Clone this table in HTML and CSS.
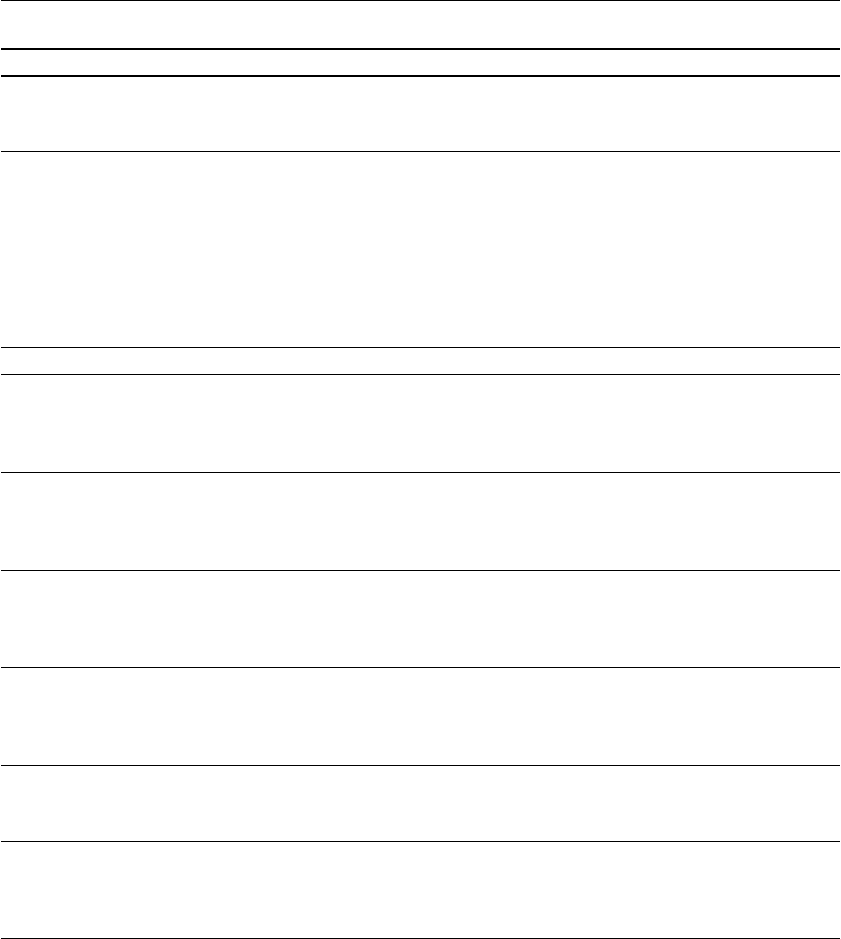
FILE: index.html
```html
<!DOCTYPE html>
<html lang="en">
<head>
<meta charset="utf-8">
<title>Table</title>
<link rel="stylesheet" href="styles.css">
</head>
<body>
<div class="sheet">
  <div class="rule thin"></div>
  <div class="row h-header"></div>
  <div class="rule thick"></div>
  <div class="row h-sub"></div>
  <div class="rule thick"></div>
  <div class="row h-a"></div>
  <div class="rule thin"></div>
  <div class="row h-b"></div>
  <div class="rule thin"></div>
  <div class="row h-c"></div>
  <div class="rule thin"></div>
  <div class="row h-d"></div>
  <div class="rule thin"></div>
  <div class="row h-d"></div>
  <div class="rule thin"></div>
  <div class="row h-e"></div>
  <div class="rule thin"></div>
  <div class="row h-d"></div>
  <div class="rule thin"></div>
  <div class="row h-f"></div>
  <div class="rule thin"></div>
  <div class="row h-g"></div>
  <div class="rule thin"></div>
</div>
</body>
</html>
```
FILE: styles.css
```css
html, body {
  margin: 0;
  padding: 0;
  background: #ffffff;
  font-family: "Liberation Sans", Arial, sans-serif;
}
.sheet {
  display: flex;
  flex-direction: column;
  width: 839px;
  margin-left: 1px;
}
.rule {
  background: #000000;
  flex: none;
}
.rule.thin { height: 1px; }
.rule.thick { height: 2px; }
.row { flex: none; }
.h-header { height: 47px; }
.h-sub { height: 25px; }
.h-a { height: 74px; }
.h-b { height: 195px; }
.h-c { height: 26px; }
.h-d { height: 97px; }
.h-e { height: 96px; }
.h-f { height: 75px; }
.h-g { height: 96px; }
```
